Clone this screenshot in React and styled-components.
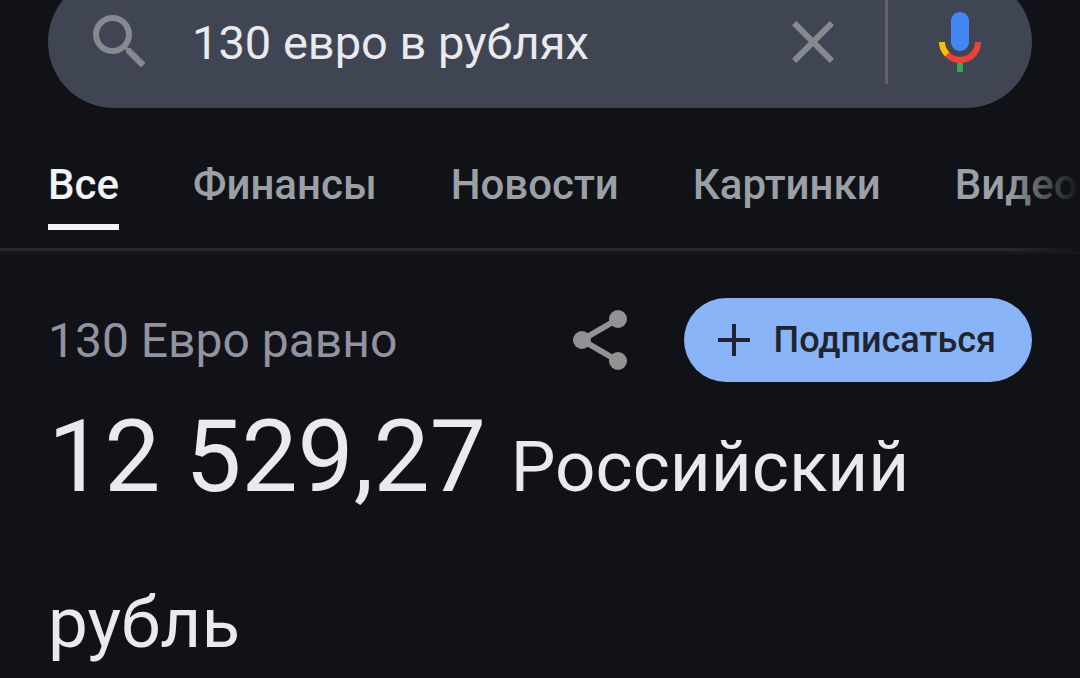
import { useState } from 'react';
import styled, { createGlobalStyle, ThemeProvider } from 'styled-components';

const theme = {
	colors: {
		background: '#111217',
		bar: '#404554',
		text: '#e9eaee',
		active: '#f1f3f6',
		tab: '#9aa0a6',
		label: '#9193a0',
		icon: '#868a90',
		share: '#929295',
		accent: '#8ab4f8',
		onAccent: '#1f2430',
		divider: '#5f6368',
	},
	fonts: {
		body: "Roboto, 'Liberation Sans', sans-serif",
	},
};

const GlobalStyle = createGlobalStyle`
	* {
		box-sizing: border-box;
	}
	body {
		margin: 0;
		background: ${theme.colors.background};
		color: ${theme.colors.text};
		font-family: ${theme.fonts.body};
	}
	button,
	input {
		font: inherit;
		color: inherit;
		border: 0;
		padding: 0;
		background: none;
	}
	svg {
		display: block;
	}
`;

const StyledHeader = styled.header`
	display: flex;
	align-items: flex-end;
	height: 108px;
	padding: 0 48px;
	overflow: hidden;
`;

const SearchBar = styled.form`
	display: flex;
	align-items: center;
	gap: 36px;
	flex: 1;
	min-width: 0;
	height: 132px;
	padding: 0 36px;
	border-radius: 66px;
	background: ${({ theme }) => theme.colors.bar};
`;

const SearchInput = styled.input`
	flex: 1;
	min-width: 0;
	height: 84px;
	font-size: 47px;
	outline: none;
`;

const IconButton = styled.button`
	flex: none;
	color: ${({ theme, $color }) => theme.colors[$color]};
	cursor: pointer;
`;

const Divider = styled.span`
	flex: none;
	width: 3px;
	height: 84px;
	background: ${({ theme }) => theme.colors.divider};
`;

const StyledNav = styled.nav`
	position: relative;
	border-bottom: 3px solid #18191d;
	&::after {
		content: '';
		position: absolute;
		inset: 0 0 0 auto;
		width: 72px;
		background: linear-gradient(
			to right,
			transparent,
			${({ theme }) => theme.colors.background}
		);
	}
`;

const TabList = styled.div`
	display: flex;
	gap: 74px;
	padding: 48px 48px 18px;
	overflow: hidden;
	border-bottom: 3px solid #292a2d;
`;

const Tab = styled.a`
	flex: none;
	padding-bottom: 10px;
	border-bottom: 6px solid
		${({ theme, $active }) => ($active ? theme.colors.active : 'transparent')};
	color: ${({ theme, $active }) =>
		$active ? theme.colors.active : theme.colors.tab};
	font-size: 42px;
	font-weight: 500;
	line-height: 58px;
	text-decoration: none;
`;

const StyledMain = styled.main`
	padding: 44px 48px 0;
`;

const ResultHead = styled.div`
	display: flex;
	align-items: center;
	gap: 48px;
`;

const ResultLabel = styled.h2`
	flex: 1;
	margin: 0;
	color: ${({ theme }) => theme.colors.label};
	font-size: 48px;
	font-weight: 400;
`;

const FollowButton = styled.button`
	display: flex;
	align-items: center;
	gap: 24px;
	height: 84px;
	padding: 0 36px 0 34px;
	border-radius: 42px;
	background: ${({ theme }) => theme.colors.accent};
	color: ${({ theme }) => theme.colors.onAccent};
	font-size: 36px;
	font-weight: 500;
	cursor: pointer;
`;

const Amount = styled.p`
	margin: -3px 0 0;
	font-size: 100px;
	line-height: 156px;
`;

const Currency = styled.span`
	font-size: 71px;
	line-height: 1;
`;

const SearchIcon = () => (
	<svg width="72" height="72" viewBox="0 0 24 24" fill="currentColor">
		<path d="M15.5 14h-.79l-.28-.27A6.471 6.471 0 0 0 16 9.5 6.5 6.5 0 1 0 9.5 16c1.61 0 3.09-.59 4.23-1.57l.27.28v.79l5 4.99L20.49 19l-4.99-5zm-6 0C7.01 14 5 11.99 5 9.5S7.01 5 9.5 5 14 7.01 14 9.5 11.99 14 9.5 14z" />
	</svg>
);

const CloseIcon = () => (
	<svg width="72" height="72" viewBox="0 0 24 24" fill="currentColor">
		<path d="M19 6.41 17.59 5 12 10.59 6.41 5 5 6.41 10.59 12 5 17.59 6.41 19 12 13.41 17.59 19 19 17.59 13.41 12z" />
	</svg>
);

const MicIcon = () => (
	<svg width="72" height="72" viewBox="0 0 24 24">
		<path
			fill="#4285f4"
			d="M12 15c1.66 0 3-1.31 3-2.97V5.01C15 3.35 13.66 2 12 2S9 3.34 9 5.01v7.02C9 13.69 10.34 15 12 15z"
		/>
		<path fill="#34a853" d="M11 18.08h2V22h-2z" />
		<path
			fill="#fbbc05"
			d="M7.05 16.87C5.78 15.54 5 14.04 5 12h2c0 1.45.56 2.42 1.47 3.38v.32l-1.15 1.18z"
		/>
		<path
			fill="#ea4335"
			d="M12 16.93a4.97 5.25 0 0 1-3.54-1.55l-1.41 1.49C8.31 18.21 10.07 19 12 19c3.87 0 6.99-2.92 6.99-7H17c0 2.92-2.24 4.93-5 4.93z"
		/>
	</svg>
);

const ShareIcon = () => (
	<svg width="72" height="72" viewBox="0 0 24 24" fill="currentColor">
		<path
			d="M18 5 6 12l12 7"
			fill="none"
			stroke="currentColor"
			strokeWidth="2"
		/>
		<circle cx="18" cy="5" r="3" />
		<circle cx="6" cy="12" r="3" />
		<circle cx="18" cy="19" r="3" />
	</svg>
);

const PlusIcon = () => (
	<svg width="32" height="32" viewBox="0 0 32 32">
		<path d="M16 0v32M0 16h32" stroke="currentColor" strokeWidth="4" />
	</svg>
);

const tabs = ['Все', 'Финансы', 'Новости', 'Картинки', 'Видео'];

const App = () => {
	const [query, setQuery] = useState('130 евро в рублях');
	const [activeTab, setActiveTab] = useState('Все');

	return (
		<ThemeProvider theme={theme}>
			<GlobalStyle />
			<StyledHeader>
				<SearchBar onSubmit={(e) => e.preventDefault()}>
					<IconButton type="submit" $color="icon" aria-label="Поиск">
						<SearchIcon />
					</IconButton>
					<SearchInput
						type="text"
						aria-label="Запрос"
						value={query}
						onChange={(e) => setQuery(e.target.value)}
					/>
					<IconButton
						type="button"
						$color="icon"
						aria-label="Очистить"
						onClick={() => setQuery('')}
					>
						<CloseIcon />
					</IconButton>
					<Divider />
					<IconButton type="button" $color="text" aria-label="Голосовой поиск">
						<MicIcon />
					</IconButton>
				</SearchBar>
			</StyledHeader>
			<StyledNav>
				<TabList>
					{tabs.map((tab) => (
						<Tab
							key={tab}
							href="#"
							$active={tab === activeTab}
							onClick={() => setActiveTab(tab)}
						>
							{tab}
						</Tab>
					))}
				</TabList>
			</StyledNav>
			<StyledMain>
				<ResultHead>
					<ResultLabel>130 Евро равно</ResultLabel>
					<IconButton type="button" $color="share" aria-label="Поделиться">
						<ShareIcon />
					</IconButton>
					<FollowButton type="button">
						<PlusIcon />
						Подписаться
					</FollowButton>
				</ResultHead>
				<Amount>
					12 529,27 <Currency>Российский рубль</Currency>
				</Amount>
			</StyledMain>
		</ThemeProvider>
	);
};

export default App;
